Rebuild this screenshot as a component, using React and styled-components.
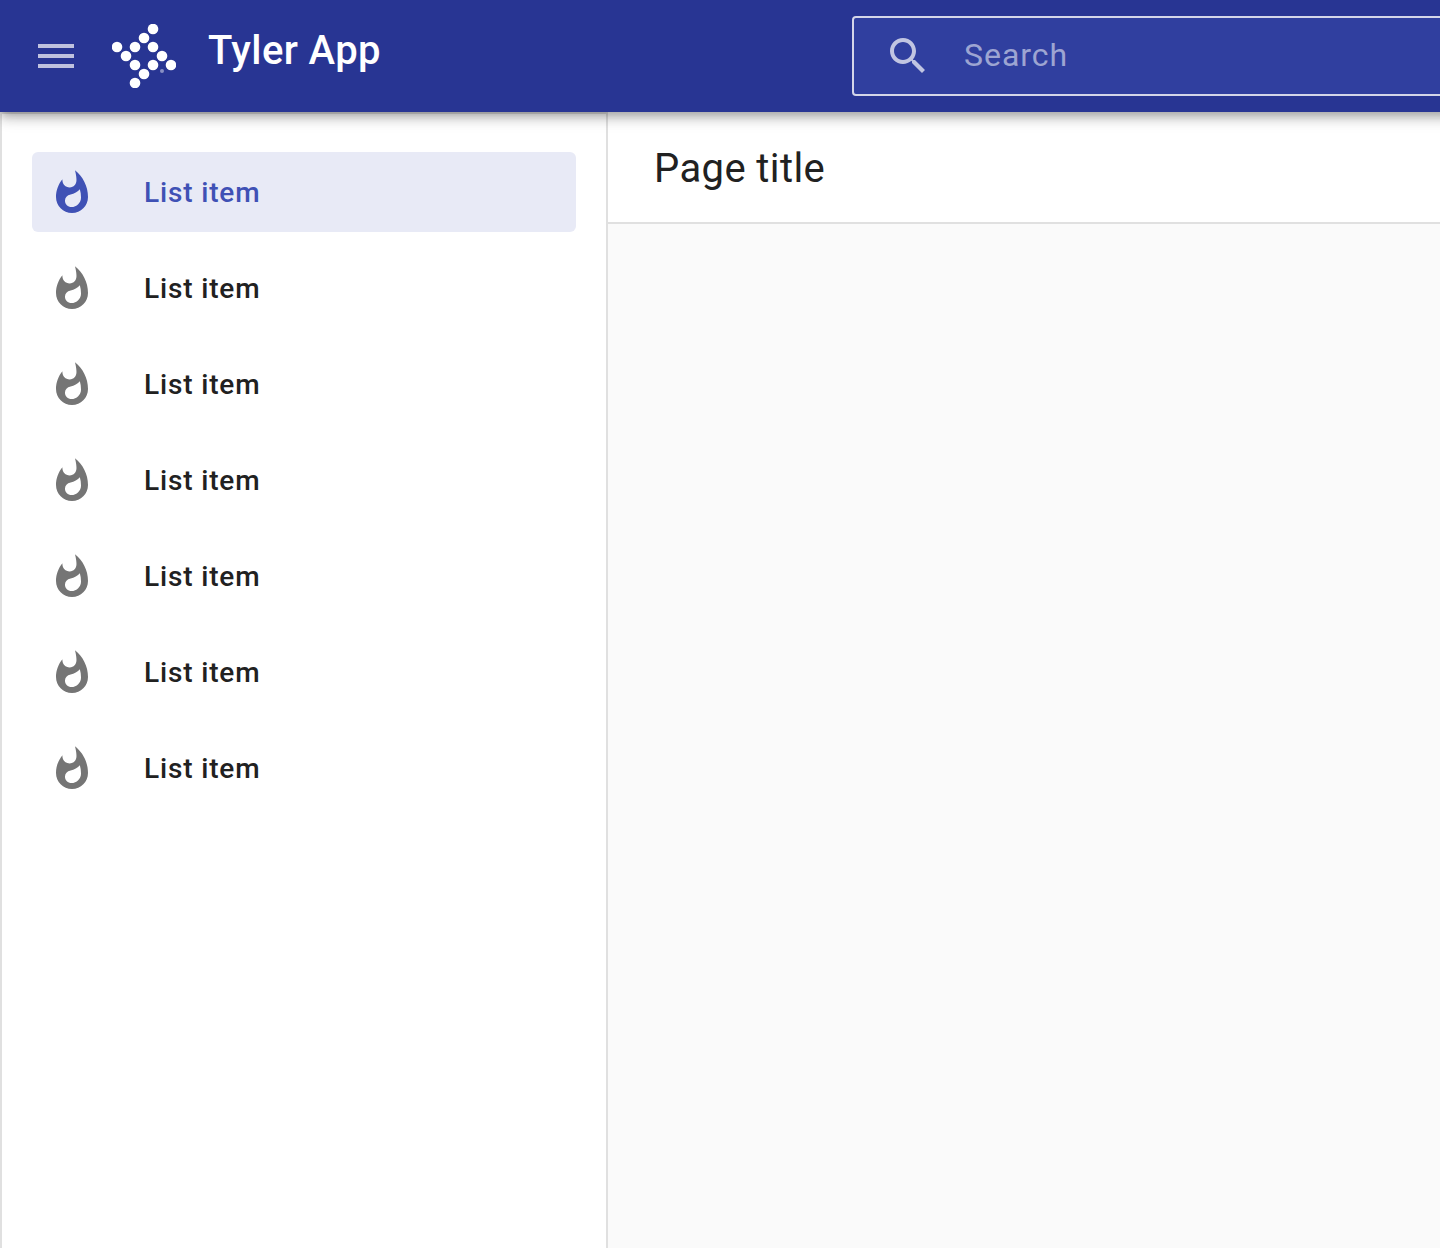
import React, { useState } from "react";
import styled, { createGlobalStyle } from "styled-components";

const GlobalStyle = createGlobalStyle`
  *, *::before, *::after { box-sizing: border-box; }
  body {
    margin: 0;
    font-family: Roboto, "Liberation Sans", sans-serif;
    color: #212121;
    background: #fafafa;
  }
`;

const Shell = styled.div`
  display: flex;
  flex-direction: column;
  min-height: 100vh;
  overflow-x: clip;
`;

/* The bar bleeds past the right edge, so its shadow and the search field run off the page. */
const AppBar = styled.header`
  position: relative;
  z-index: 1;
  display: flex;
  align-items: center;
  margin-right: -32px;
  padding: 16px 0 16px 32px;
  background: #283593;
  color: #fff;
  box-shadow: 0 4px 8px -2px rgba(0, 0, 0, 0.2),
    0 8px 10px 0 rgba(0, 0, 0, 0.14),
    0 2px 20px 0 rgba(0, 0, 0, 0.12);
`;

const Brand = styled.div`
  flex: 1;
  display: flex;
  align-items: center;
  gap: 32px;
`;

const MenuButton = styled.button`
  display: flex;
  padding: 0;
  border: 0;
  background: none;
  color: rgba(255, 255, 255, 0.7);
  cursor: pointer;
`;

const Icon = styled.svg`
  display: block;
  flex: none;
  width: 48px;
  height: 48px;
  fill: currentColor;
`;

const Logo = styled.svg`
  display: block;
  width: 64px;
  height: 64px;
  fill: currentColor;
`;

const AppTitle = styled.h1`
  margin: 0;
  padding-bottom: 10px;
  font-size: 40px;
  font-weight: 500;
  line-height: 48px;
  letter-spacing: 0.01em;
`;

const SearchField = styled.label`
  flex: 0 1 620px;
  display: flex;
  align-items: center;
  gap: 32px;
  height: 80px;
  padding-left: 30px;
  border: 2px solid rgba(255, 255, 255, 0.8);
  border-radius: 4px;
  background: #303f9f;
  background-clip: padding-box;
  color: rgba(255, 255, 255, 0.7);
`;

const SearchInput = styled.input`
  flex: 1;
  min-width: 0;
  padding: 0 0 2px;
  border: 0;
  outline: 0;
  background: none;
  color: #fff;
  font-family: inherit;
  font-size: 32px;
  line-height: 40px;
  letter-spacing: 0.03em;
  &::placeholder {
    color: rgba(255, 255, 255, 0.54);
    opacity: 1;
  }
`;

const Body = styled.div`
  flex: 1;
  display: flex;
`;

const Drawer = styled.nav`
  flex: 0 0 608px;
  padding: 38px 30px;
  border: 2px solid #e0e0e0;
  border-bottom: 0;
  background: #fff;
`;

const List = styled.ul`
  display: flex;
  flex-direction: column;
  gap: 16px;
  margin: 0;
  padding: 0;
  list-style: none;
`;

const ListButton = styled.button`
  display: flex;
  align-items: center;
  gap: 48px;
  width: 100%;
  height: 80px;
  padding: 2px 16px 0;
  border: 0;
  border-radius: 6px;
  background: ${(p) => (p.$active ? "#e8eaf6" : "transparent")};
  color: ${(p) => (p.$active ? "#3f51b5" : "#212121")};
  font-family: inherit;
  font-size: 28px;
  font-weight: 500;
  line-height: 40px;
  letter-spacing: 0.03em;
  cursor: pointer;

  ${Icon} {
    color: ${(p) => (p.$active ? "#3f51b5" : "#757575")};
  }
`;

const Main = styled.main`
  flex: 1;
  min-width: 0;
`;

const PageHeader = styled.div`
  padding: 34px 46px 30px;
  border-bottom: 2px solid #e0e0e0;
  background: #fff;
`;

const PageTitle = styled.h2`
  margin: 0;
  font-size: 40px;
  font-weight: 400;
  line-height: 46px;
  letter-spacing: 0.01em;
`;

const logoDots = [
  [41, 5], [32, 14], [5, 23], [23, 23], [41, 23], [14, 32],
  [50, 32], [23, 41], [41, 41], [59, 41], [32, 50], [23, 59],
];

const items = Array.from({ length: 7 }, (_, id) => ({ id, label: "List item" }));

function FlameIcon() {
  return (
    <Icon viewBox="0 0 24 24" aria-hidden="true">
      <path d="M13.5.67s.74 2.65.74 4.8c0 2.06-1.35 3.73-3.41 3.73-2.07 0-3.63-1.67-3.63-3.73l.03-.36C5.21 7.51 4 10.62 4 14c0 4.42 3.58 8 8 8s8-3.58 8-8C20 8.61 17.41 3.8 13.5.67zM11.71 19c-1.78 0-3.22-1.4-3.22-3.14 0-1.62 1.05-2.76 2.81-3.12 1.77-.36 3.6-1.21 4.62-2.58.39 1.29.59 2.65.59 4.04 0 2.65-2.15 4.8-4.8 4.8z" />
    </Icon>
  );
}

export default function App() {
  const [active, setActive] = useState(0);

  return (
    <Shell>
      <GlobalStyle />
      <AppBar>
        <Brand>
          <MenuButton type="button" aria-label="Menu">
            <Icon viewBox="0 0 24 24" aria-hidden="true">
              <path d="M3 18h18v-2H3v2zm0-5h18v-2H3v2zm0-7v2h18V6H3z" />
            </Icon>
          </MenuButton>
          <Logo viewBox="0 0 64 64" aria-hidden="true">
            {logoDots.map(([x, y]) => (
              <circle key={`${x}-${y}`} cx={x} cy={y} r="5.3" />
            ))}
            <circle cx="50" cy="47" r="2" opacity="0.45" />
          </Logo>
          <AppTitle>Tyler App</AppTitle>
        </Brand>
        <SearchField>
          <Icon viewBox="0 0 24 24" aria-hidden="true">
            <path d="M15.5 14h-.79l-.28-.27C15.41 12.59 16 11.11 16 9.5 16 5.91 13.09 3 9.5 3S3 5.91 3 9.5 5.91 16 9.5 16c1.61 0 3.09-.59 4.23-1.57l.27.28v.79l5 4.99L20.49 19l-4.99-5zm-6 0C7.01 14 5 11.99 5 9.5S7.01 5 9.5 5 14 7.01 14 9.5 11.99 14 9.5 14z" />
          </Icon>
          <SearchInput type="text" placeholder="Search" aria-label="Search" />
        </SearchField>
      </AppBar>
      <Body>
        <Drawer>
          <List>
            {items.map(({ id, label }) => (
              <li key={id}>
                <ListButton
                  type="button"
                  $active={id === active}
                  onClick={() => setActive(id)}
                >
                  <FlameIcon />
                  {label}
                </ListButton>
              </li>
            ))}
          </List>
        </Drawer>
        <Main>
          <PageHeader>
            <PageTitle>Page title</PageTitle>
          </PageHeader>
        </Main>
      </Body>
    </Shell>
  );
}
